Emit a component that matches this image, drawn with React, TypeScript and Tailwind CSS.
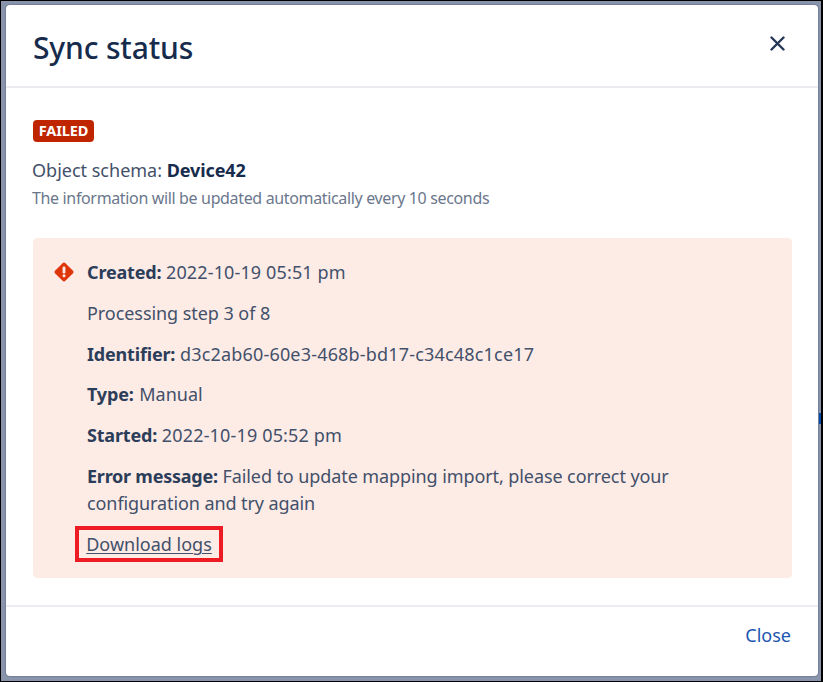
import type { ReactNode } from "react";

function Row({ children }: { children: ReactNode }) {
  return <p className="whitespace-nowrap leading-[27px]">{children}</p>;
}

function Label({ children }: { children: ReactNode }) {
  return <b className="tracking-[-0.18px] text-[#2c3d5a]">{children}</b>;
}

function ErrorIcon() {
  return (
    <svg width="20" height="20" viewBox="0 0 20 20" className="mt-[3px] ml-[20.5px] shrink-0">
      <path d="M8.6 1.2a2 2 0 0 1 2.8 0l7.4 7.4a2 2 0 0 1 0 2.8l-7.4 7.4a2 2 0 0 1-2.8 0L1.2 11.4a2 2 0 0 1 0-2.8z" fill="#de350b" />
      <rect x="8.6" y="4.6" width="2.8" height="6.8" rx="1.2" fill="#ffebe6" />
      <circle cx="10" cy="13.8" r="1.5" fill="#ffebe6" />
    </svg>
  );
}

export default function App() {
  return (
    <div className="h-[682px] w-[823px] border border-black border-r-2 bg-[#8993a9] pt-[4px] pl-[5px] font-['Noto_Sans','Open_Sans',sans-serif]">
      <div className="flex h-[671px] w-[812px] flex-col rounded-[4px] bg-white text-[#42506a] shadow-[0_0_1px_1px_#72809a]">
        <header className="flex h-[83px] shrink-0 items-center justify-between border-b-2 border-[#ebecf0] pr-[34px] pl-[27px]">
          <h1 className="pt-[4px] text-[30px] font-medium tracking-[-0.15px] text-[#172b4d]">Sync status</h1>
          <svg width="15" height="15" viewBox="0 0 15 15" className="-mt-[4px] -mr-[1px]">
            <path d="M1.5 1.5L13.5 13.5M13.5 1.5L1.5 13.5" stroke="#253858" strokeWidth="2.4" strokeLinecap="round" />
          </svg>
        </header>
        <main className="flex flex-1 flex-col px-[27px] pt-[31.5px]">
          <span className="flex h-[22px] w-[61px] items-center justify-center rounded-[4px] bg-[#bf2600] text-[14.5px] font-bold tracking-[-0.1px] text-white">FAILED</span>
          <p className="mt-[15.5px] -ml-[1px] text-[18px] leading-[27px]">
            Object schema: <b className="tracking-[-0.1px] text-[#172b4d]">Device42</b>
          </p>
          <p className="mt-[2px] -ml-[1px] text-[16px] leading-[24px] tracking-[-0.35px] text-[#6b778c]">The information will be updated automatically every 10 seconds</p>
          <section className="mt-[28px] flex h-[339.5px] w-[759px] rounded-[4px] bg-[#fdebe6] pt-[21px] text-[18px]">
            <ErrorIcon />
            <div className="ml-[13.5px] flex flex-col gap-[13.8px]">
              <Row><Label>Created:</Label> <span className="tracking-[0.13px]">2022-10-19 05:51 pm</span></Row>
              <Row><span className="tracking-[-0.06px]">Processing step 3 of 8</span></Row>
              <Row><Label>Identifier:</Label> <span className="tracking-[0.18px]">d3c2ab60-60e3-468b-bd17-c34c48c1ce17</span></Row>
              <Row><Label>Type:</Label> <span className="ml-[1px]">Manual</span></Row>
              <Row><Label>Started:</Label> <span className="tracking-[0.16px]">2022-10-19 05:52 pm</span></Row>
              <Row>
                <b className="tracking-[-0.24px] text-[#2c3d5a]">Error message:</b> <span className="tracking-[-0.09px]">Failed to update mapping import, please correct your<br />configuration and try again</span>
              </Row>
              <a className="-mt-[5px] -ml-[12px] flex h-[36px] w-[148px] items-center justify-center border-[4px] border-[#ed1c24] pt-[1px] underline decoration-1 underline-offset-[2px]">Download logs</a>
            </div>
          </section>
        </main>
        <footer className="flex h-[71px] shrink-0 justify-end border-t-2 border-[#ebecf0] pt-[14.5px] pr-[27px]">
          <button className="h-[27px] text-[18px] leading-[27px] text-[#1c56b0]">Close</button>
        </footer>
      </div>
      <div className="absolute top-[413px] left-[819px] h-[11px] w-[2px] bg-[#0747a6]" />
    </div>
  );
}
